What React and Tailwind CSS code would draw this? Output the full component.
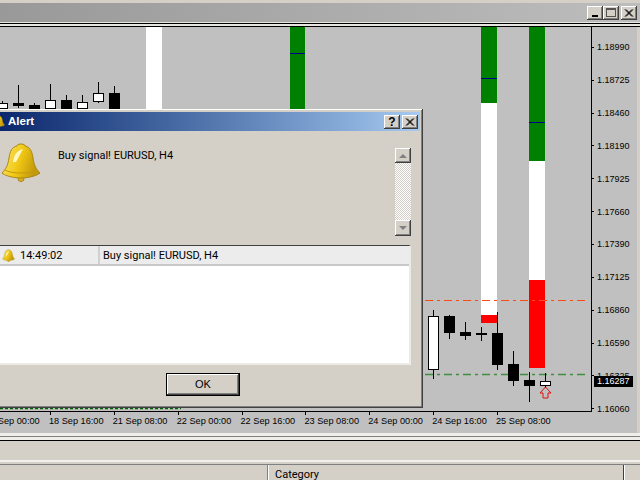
import React from "react";

const prices = ["1.18990", "1.18725", "1.18460", "1.18190", "1.17925", "1.17660", "1.17390", "1.17125", "1.16860", "1.16590", "1.16325", "1.16060"];
const times = ["18 Sep 00:00", "18 Sep 16:00", "21 Sep 08:00", "22 Sep 00:00", "22 Sep 16:00", "23 Sep 08:00", "24 Sep 00:00", "24 Sep 16:00", "25 Sep 08:00"];

// x, body top, body bottom, wick top, wick bottom, bullish
const candles = [
  [2, 103, 108, 101, 108, true],
  [18, 103, 105, 85, 108, false],
  [34, 105, 108, 103, 108, false],
  [50, 100, 108, 84, 108, true],
  [66, 100, 108, 95, 108, false],
  [82, 102, 108, 95, 108, true],
  [98, 93, 101, 82, 103, true],
  [114, 93, 108, 86, 108, false],
  [433.5, 316, 369, 310, 379, true],
  [449.5, 316, 332, 315, 339, false],
  [465.5, 332, 335, 322, 340, false],
  [481.5, 333, 334, 327, 341, false],
  [497.5, 333, 364, 312, 370, false],
  [513.5, 364, 380, 351, 386, false],
  [529.5, 380, 385, 372, 402, false],
  [545.5, 381, 385, 373, 388, true],
];

const raised = "shadow-[inset_-1px_-1px_0_#404040,inset_1px_1px_0_#ffffff,inset_-2px_-2px_0_#808080]";

const Bell = ({ className, id }) => (
  <svg viewBox="0 0 40 40" className={className}>
    <defs>
      <linearGradient id={id} x1="0" y1="0" x2="1" y2="0.3">
        <stop offset="0" stopColor="#ffe873" />
        <stop offset="0.55" stopColor="#f0c814" />
        <stop offset="1" stopColor="#c2980c" />
      </linearGradient>
    </defs>
    <circle cx="20" cy="36.5" r="3" fill="#e0b020" stroke="#a98612" />
    <path
      d="M20 2C23 2 24 3 24 4C29 5 31 9 32 16C33 23 35 27 39 31C37 33 29 36 20 36C11 36 3 33 1 31C5 27 7 23 8 16C9 9 11 5 16 4C16 3 17 2 20 2Z"
      fill={`url(#${id})`}
      stroke="#a98612"
      strokeWidth="1"
    />
    <path d="M4 28C10 32 30 32 36 28" fill="none" stroke="#c49a0e" strokeWidth="1" />
    <path d="M22 7L15 20L12 20C13 13 15 9 22 7Z" fill="#fff6c0" />
  </svg>
);

const XIcon = () => (
  <svg viewBox="0 0 16 14" className="w-4 h-[14px]">
    <path d="M4 3.5L11 10.5M5 3.5L12 10.5M11 3.5L4 10.5M12 3.5L5 10.5" stroke="#000" strokeWidth="1" fill="none" />
  </svg>
);

const ChartSvg = () => (
  <svg width="591" height="384" viewBox="0 27 591 384" className="block">
    <rect x="146" y="27" width="16" height="82" fill="#fff" />
    <rect x="290" y="27" width="15" height="82" fill="#008000" />
    <rect x="290" y="53" width="15" height="1" fill="#000080" />

    <rect x="481" y="27" width="16" height="76" fill="#008000" />
    <rect x="481" y="78" width="16" height="1" fill="#000080" />
    <rect x="481" y="103" width="16" height="212" fill="#fff" />
    <rect x="481" y="315" width="16" height="8" fill="#ff0000" />

    <rect x="529" y="27" width="16" height="134" fill="#008000" />
    <rect x="529" y="122" width="16" height="1" fill="#000080" />
    <rect x="529" y="161" width="16" height="119" fill="#fff" />
    <rect x="529" y="280" width="16" height="88" fill="#ff0000" />

    <path d="M425 300.5H587" stroke="#ff4a14" strokeDasharray="8 4 3 4" />
    <path d="M425 374.5H587" stroke="#3f8f3f" strokeWidth="1.5" strokeDasharray="8 4 3 4" />
    <path d="M0 408.5H181" stroke="#006400" strokeWidth="1.5" strokeDasharray="3 2" />

    {candles.map(([x, top, bottom, wickTop, wickBottom, up]) => (
      <g key={x}>
        <rect x={Math.floor(x)} y={wickTop} width="1" height={wickBottom - wickTop} fill="#000" />
        <rect
          x={Math.floor(x) - 4.5}
          y={top + 0.5}
          width="10"
          height={bottom - top}
          fill={up ? "#fff" : "#000"}
          stroke="#000"
        />
      </g>
    ))}
    <path d="M545.5 387L551 393H548V398H543V393H540Z" fill="none" stroke="#e01010" />
  </svg>
);

const AlertDialog = () => (
  <div className={`absolute left-[-10px] top-[109px] w-[433px] h-[299px] p-[3px] bg-[#d4d0c8] flex flex-col ${raised}`}>
    <div className="h-[19px] shrink-0 flex items-center bg-gradient-to-r from-[#0a246a] to-[#a6caf0] pr-[2px]">
      <Bell id="bell-small" className="w-[13px] h-[13px] ml-[-1px]" />
      <span className="ml-[3px] text-white font-bold text-[11.5px] leading-none">Alert</span>
      <button className={`ml-auto w-4 h-[14px] bg-[#d4d0c8] text-[12px] font-bold leading-none ${raised}`}>?</button>
      <button className={`ml-[2px] w-4 h-[14px] bg-[#d4d0c8] flex ${raised}`}>
        <XIcon />
      </button>
    </div>

    <div className="h-[114px] shrink-0 flex pl-2 pr-[9px] font-['Roboto',sans-serif]">
      <Bell id="bell-large" className="w-10 h-10 mt-[11px] shrink-0" />
      <p className="ml-[17px] mt-[18px] flex-1 text-[11px] leading-[14px] text-black">Buy signal! EURUSD, H4</p>
      <div className="mt-[17px] w-4 h-[88px] flex flex-col shrink-0">
        <div className={`h-[15px] flex items-center justify-center bg-[#d4d0c8] ${raised}`}>
          <svg viewBox="0 0 8 4" className="w-2 h-1"><path d="M4 0L8 4H0Z" fill="#808080" /></svg>
        </div>
        <div className="flex-1 bg-[image:repeating-conic-gradient(#ffffff_0_25%,#d4d0c8_0_50%)] bg-[length:2px_2px]" />
        <div className={`h-4 flex items-center justify-center bg-[#d4d0c8] ${raised}`}>
          <svg viewBox="0 0 8 4" className="w-2 h-1"><path d="M0 0H8L4 4Z" fill="#808080" /></svg>
        </div>
      </div>
    </div>

    <div className="ml-[-3px] mr-[9px] h-[120px] shrink-0 flex flex-col border-t border-t-[#404040] border-r-2 border-r-[#ecebe6] border-b-2 border-b-[#ecebe6] bg-white font-['Roboto',sans-serif]">
      <div className="h-5 shrink-0 flex items-center bg-[#ececec] border-b-2 border-b-[#c8c8c8] text-[11px] text-black">
        <div className="w-[110px] h-full flex items-center border-r-2 border-r-[#d0d0d0] pl-3">
          <Bell id="bell-list" className="w-[13px] h-[13px]" />
          <span className="ml-[5px] pt-[2px]">14:49:02</span>
        </div>
        <span className="ml-[3px] pt-[2px]">Buy signal! EURUSD, H4</span>
      </div>
    </div>

    <div className="flex justify-center mt-[8px]">
      <button className={`ml-[-7px] w-[74px] h-[23px] bg-[#d4d0c8] border border-black text-[11px] text-black leading-none ${raised}`}>OK</button>
    </div>
  </div>
);

export default function App() {
  return (
    <div className="relative w-[640px] h-[480px] overflow-hidden flex flex-col bg-[#d4d0c8] font-['Liberation_Sans',sans-serif]">
      {/* Chart window title */}
      <div className="h-[22px] shrink-0 pt-[3px]">
        <div className="h-[19px] flex items-center justify-end pr-[3px] bg-gradient-to-r from-[#999999] to-[#bdbdbd]">
          <button className={`w-4 h-[14px] bg-[#d4d0c8] flex items-end justify-center pb-[3px] ${raised}`}>
            <span className="block w-[6px] h-[2px] bg-black" />
          </button>
          <button className={`w-4 h-[14px] bg-[#d4d0c8] flex items-center justify-center ${raised}`}>
            <span className="block w-[10px] h-[9px] border border-black border-t-2 opacity-60" />
          </button>
          <button className={`ml-[2px] w-4 h-[14px] bg-[#d4d0c8] flex ${raised}`}>
            <XIcon />
          </button>
        </div>
      </div>
      <div className="h-[5px] shrink-0 flex flex-col">
        <div className="h-px bg-[#e8e6e0]" />
        <div className="h-px bg-black" />
        <div className="h-px bg-[#e8e6e0]" />
        <div className="h-px bg-[#e8e6e0]" />
        <div className="h-px bg-black" />
      </div>

      {/* Chart */}
      <div className="h-[406px] shrink-0 flex pr-[3px]">
        <div className="w-[637px] bg-[#c0c0c0] flex flex-col">
          <div className="flex h-[385px] shrink-0">
            <div className="w-[592px] h-[385px] shrink-0 border-r border-b border-black">
              <ChartSvg />
            </div>
            <div className="flex-1 flex flex-col pt-1 text-[9px] leading-none text-black">
              {prices.map((price) => (
                <div key={price} className="h-[32.85px] shrink-0 flex items-center">
                  <span className="w-[2px] h-px bg-black" />
                  <span className="ml-[3px] pt-px">{price}</span>
                </div>
              ))}
            </div>
          </div>
          <div className="flex ml-[-14px] text-[9.2px] leading-none text-black">
            {times.map((time) => (
              <div key={time} className="w-[63.875px] shrink-0 flex flex-col">
                <span className="w-px h-[3px] bg-black" />
                <span className="mt-[2px] ml-[-1px] whitespace-nowrap">{time}</span>
              </div>
            ))}
          </div>
        </div>
      </div>

      {/* Below the chart */}
      <div className="h-[3px] shrink-0 bg-[#efeee9]" />
      <div className="h-px shrink-0 bg-[#808080]" />
      <div className="h-[3px] shrink-0 bg-[#efeee9]" />
      <div className="h-px shrink-0 bg-black" />
      <div className="h-[19px] shrink-0" />
      <div className="h-[2px] shrink-0 bg-[#f1f0ec]" />
      <div className="h-[2px] shrink-0" />
      <div className="h-px shrink-0 bg-[#808080]" />
      <div className="flex-1 flex text-[11px] leading-none text-black font-['Roboto',sans-serif]">
        <div className="w-[268px] border-r border-r-[#808080]" />
        <div className="w-[356px] border-l border-l-white border-r border-r-[#404040] pl-[6px] pt-1">Category</div>
        <div className="flex-1 border-l border-l-white" />
      </div>

      {/* Current price tag */}
      <div className="absolute left-[594px] top-[376px] w-[39px] h-[11px] bg-black text-white text-[9px] leading-[11px] pl-[3px]">1.16287</div>

      <AlertDialog />
    </div>
  );
}
